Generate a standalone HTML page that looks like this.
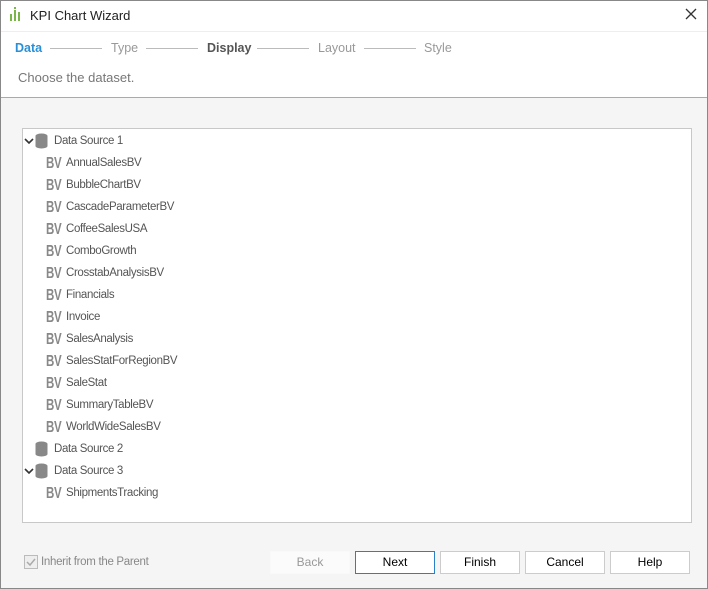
<html><head><style>
body{margin:0;width:708px;height:589px;overflow:hidden;font-family:"Liberation Sans",sans-serif;font-size:12px;}
.win{position:absolute;left:0;top:0;width:708px;height:589px;box-shadow:inset 0 0 0 1px #888;background:#f4f5f4;}
.top{position:absolute;left:1px;top:1px;width:706px;height:96px;background:#fff;border-bottom:1px solid #aaa;}
.a{position:absolute;white-space:nowrap;}
.tree{position:absolute;left:22px;top:128px;width:668px;height:393px;background:#fff;border:1px solid #c8c8c8;}
.row{position:absolute;left:0;width:400px;height:16px;line-height:16px;color:#555;white-space:nowrap;}
.bv{position:absolute;left:23px;top:1px;font-weight:bold;color:#888;font-size:16px;transform:scaleX(0.72);transform-origin:left;letter-spacing:-0.5px}
.t{position:absolute;left:43px;font-size:11.5px;letter-spacing:-0.35px;}
.btn{position:absolute;top:551px;width:78px;height:21px;border:1px solid #ccc;background:#fff;text-align:center;line-height:21px;color:#000;}
</style></head><body>
<div class="win">
<div class="top">
<svg class="a" style="left:8px;top:6px" width="14" height="16"><rect x="1" y="7" width="2" height="7" fill="#7ab648"/><rect x="5" y="3" width="2" height="11" fill="#7ab648"/><rect x="9" y="5" width="2" height="9" fill="#7ab648"/><rect x="5" y="0" width="2" height="2" fill="#7ab648"/></svg>
<div class="a" style="left:29px;top:7px;font-size:13px;color:#222">KPI Chart Wizard</div>
<svg class="a" style="left:684px;top:7px" width="12" height="12"><path d="M1 1L11 11M11 1L1 11" stroke="#333" stroke-width="1.3"/></svg>
<div class="a" style="left:0;top:30px;width:706px;border-top:1px solid #eee"></div>
<div class="a" style="left:14px;top:40px;font-weight:bold;color:#2a8fd6;font-size:12.5px">Data</div>
<div class="a" style="left:49px;top:47px;width:52px;border-top:1px solid #bbb"></div>
<div class="a" style="left:110px;top:40px;color:#999;font-size:12.5px">Type</div>
<div class="a" style="left:145px;top:47px;width:52px;border-top:1px solid #bbb"></div>
<div class="a" style="left:206px;top:40px;font-weight:bold;color:#555;font-size:12.5px">Display</div>
<div class="a" style="left:256px;top:47px;width:52px;border-top:1px solid #bbb"></div>
<div class="a" style="left:317px;top:40px;color:#999;font-size:12.5px">Layout</div>
<div class="a" style="left:363px;top:47px;width:52px;border-top:1px solid #bbb"></div>
<div class="a" style="left:423px;top:40px;color:#999;font-size:12.5px">Style</div>
<div class="a" style="left:17px;top:69px;color:#777;font-size:13px">Choose the dataset.</div>
</div>
<div class="tree">
<div class="row" style="top:4px"><svg class="a" style="left:1px;top:4px" width="10" height="8"><path d="M1 2L5 6L9 2" stroke="#333" stroke-width="1.6" fill="none"/></svg><svg class="a" style="left:12px;top:0" width="13" height="16"><ellipse cx="6.5" cy="3" rx="6" ry="2.5" fill="#888"/><rect x="0.5" y="3" width="12" height="10" fill="#888"/><ellipse cx="6.5" cy="13" rx="6" ry="2.5" fill="#888"/></svg><span class="t" style="left:31px">Data Source 1</span></div>
<div class="row" style="top:26px"><span class="bv">BV</span><span class="t">AnnualSalesBV</span></div>
<div class="row" style="top:48px"><span class="bv">BV</span><span class="t">BubbleChartBV</span></div>
<div class="row" style="top:70px"><span class="bv">BV</span><span class="t">CascadeParameterBV</span></div>
<div class="row" style="top:92px"><span class="bv">BV</span><span class="t">CoffeeSalesUSA</span></div>
<div class="row" style="top:114px"><span class="bv">BV</span><span class="t">ComboGrowth</span></div>
<div class="row" style="top:136px"><span class="bv">BV</span><span class="t">CrosstabAnalysisBV</span></div>
<div class="row" style="top:158px"><span class="bv">BV</span><span class="t">Financials</span></div>
<div class="row" style="top:180px"><span class="bv">BV</span><span class="t">Invoice</span></div>
<div class="row" style="top:202px"><span class="bv">BV</span><span class="t">SalesAnalysis</span></div>
<div class="row" style="top:224px"><span class="bv">BV</span><span class="t">SalesStatForRegionBV</span></div>
<div class="row" style="top:246px"><span class="bv">BV</span><span class="t">SaleStat</span></div>
<div class="row" style="top:268px"><span class="bv">BV</span><span class="t">SummaryTableBV</span></div>
<div class="row" style="top:290px"><span class="bv">BV</span><span class="t">WorldWideSalesBV</span></div>
<div class="row" style="top:312px"><svg class="a" style="left:12px;top:0" width="13" height="16"><ellipse cx="6.5" cy="3" rx="6" ry="2.5" fill="#888"/><rect x="0.5" y="3" width="12" height="10" fill="#888"/><ellipse cx="6.5" cy="13" rx="6" ry="2.5" fill="#888"/></svg><span class="t" style="left:31px">Data Source 2</span></div>
<div class="row" style="top:334px"><svg class="a" style="left:1px;top:4px" width="10" height="8"><path d="M1 2L5 6L9 2" stroke="#333" stroke-width="1.6" fill="none"/></svg><svg class="a" style="left:12px;top:0" width="13" height="16"><ellipse cx="6.5" cy="3" rx="6" ry="2.5" fill="#888"/><rect x="0.5" y="3" width="12" height="10" fill="#888"/><ellipse cx="6.5" cy="13" rx="6" ry="2.5" fill="#888"/></svg><span class="t" style="left:31px">Data Source 3</span></div>
<div class="row" style="top:356px"><span class="bv">BV</span><span class="t">ShipmentsTracking</span></div>
</div>
<div class="a" style="left:24px;top:555px;width:12px;height:12px;border:1px solid #bbb;background:#eee"></div>
<svg class="a" style="left:25px;top:556px" width="12" height="12"><path d="M2 6L5 9L10 3" stroke="#aaa" stroke-width="1.5" fill="none"/></svg>
<div class="a" style="left:41px;top:556px;color:#888;font-size:11.5px;letter-spacing:-0.3px">Inherit from the Parent</div>
<div class="btn" style="left:270px;border-color:#f8f9f8;background:#fafbfa;color:#999">Back</div>
<div class="btn" style="left:355px;border-color:#2a7fc8">Next</div>
<div class="btn" style="left:440px">Finish</div>
<div class="btn" style="left:525px">Cancel</div>
<div class="btn" style="left:610px">Help</div>
</div>
</body></html>
